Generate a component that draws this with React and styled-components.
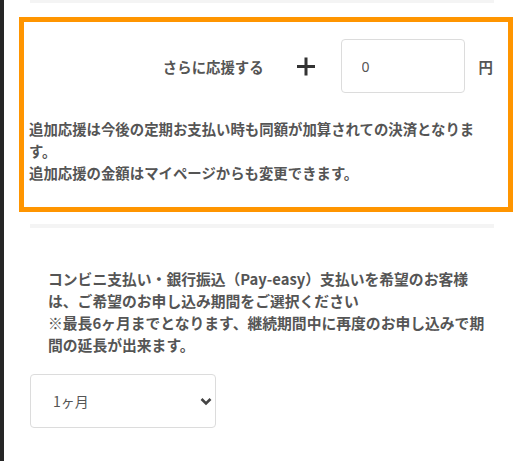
import styled, { createGlobalStyle } from "styled-components";

const GlobalStyle = createGlobalStyle`
  html, body {
    margin: 0;
    padding: 0;
    background: #fff;
  }
  body {
    font-family: "Noto Sans CJK JP", "Noto Sans", sans-serif;
    color: #555;
  }
`;

const Page = styled.div`
  display: flex;
  min-height: 100vh;
`;

const Strip = styled.div`
  width: 4px;
  flex-shrink: 0;
  background: #262626;
`;

const Main = styled.div`
  flex: 1;
  padding-left: 15px;
`;

const Rule = styled.div`
  width: 464px;
  height: ${(p) => p.$h || 3}px;
  margin-left: 11px;
  margin-top: ${(p) => p.$top || 0}px;
  background: #f4f4f4;
`;

const SupportBox = styled.div`
  box-sizing: border-box;
  width: 494px;
  height: 195px;
  margin-top: 14px;
  border: 5px solid #ff9500;
  padding: 17px 14px 0 5px;
`;

const AmountRow = styled.div`
  display: flex;
  align-items: center;
  justify-content: flex-end;
  height: 54px;
  padding-right: 1px;
`;

const Label = styled.span`
  font-size: 14.4px;
  font-weight: 700;
  color: #555;
  margin-right: ${(p) => p.$gap || 0}px;
`;

const Plus = styled.svg`
  width: 18px;
  height: 20px;
  margin-right: 26px;
`;

const AmountInput = styled.input`
  box-sizing: border-box;
  width: 124px;
  height: 54px;
  border: 1px solid #dcdcdc;
  border-radius: 4px;
  padding: 0 0 0 20px;
  margin-right: 14px;
  font-family: "Noto Sans", sans-serif;
  font-size: 14px;
  color: #555;
  outline: none;
`;

const Note = styled.p`
  margin: ${(p) => p.$top || 0}px 0 0;
  font-size: ${(p) => p.$size || 14.4}px;
  line-height: 22px;
  font-weight: 700;
  color: #555;
`;

const Section = styled.div`
  width: 444px;
  margin: 40px 0 0 29px;
`;

const SelectWrap = styled.div`
  position: relative;
  width: 186px;
  margin: 18px 0 0 11px;
`;

const Select = styled.select`
  appearance: none;
  box-sizing: border-box;
  width: 100%;
  height: 54px;
  border: 1px solid #dcdcdc;
  border-radius: 4px;
  background: #fff;
  padding: 0 0 0 22px;
  font-family: "Noto Sans CJK JP", sans-serif;
  font-size: 14px;
  color: #555;
  outline: none;
`;

const Chevron = styled.svg`
  position: absolute;
  right: 4px;
  top: 23px;
  width: 12px;
  height: 9px;
  pointer-events: none;
`;

export default function App() {
  return (
    <>
      <GlobalStyle />
      <Page>
        <Strip />
        <Main>
          <Rule />
          <SupportBox>
            <AmountRow>
              <Label $gap={33}>さらに応援する</Label>
              <Plus viewBox="0 0 18 20">
                <path d="M0 10.5H18M9 1.5V19.5" stroke="#333" strokeWidth="3" />
              </Plus>
              <AmountInput defaultValue="0" />
              <Label>円</Label>
            </AmountRow>
            <Note $top={25}>
              追加応援は今後の定期お支払い時も同額が加算されての決済となります。
              <br />
              追加応援の金額はマイページからも変更できます。
            </Note>
          </SupportBox>
          <Rule $top={12} $h={4} />
          <Section>
            <Note $size={14.8}>
              コンビニ支払い・銀行振込（Pay-easy）支払いを希望のお客様は、ご希望のお申し込み期間をご選択ください
              <br />
              ※最長6ヶ月までとなります、継続期間中に再度のお申し込みで期間の延長が出来ます。
            </Note>
          </Section>
          <SelectWrap>
            <Select defaultValue="1">
              <option value="1">1ヶ月</option>
              <option value="2">2ヶ月</option>
              <option value="3">3ヶ月</option>
              <option value="6">6ヶ月</option>
            </Select>
            <Chevron viewBox="0 0 12 9">
              <path d="M1.5 2L6 6.5L10.5 2" fill="none" stroke="#444" strokeWidth="2.6" />
            </Chevron>
          </SelectWrap>
        </Main>
      </Page>
    </>
  );
}
